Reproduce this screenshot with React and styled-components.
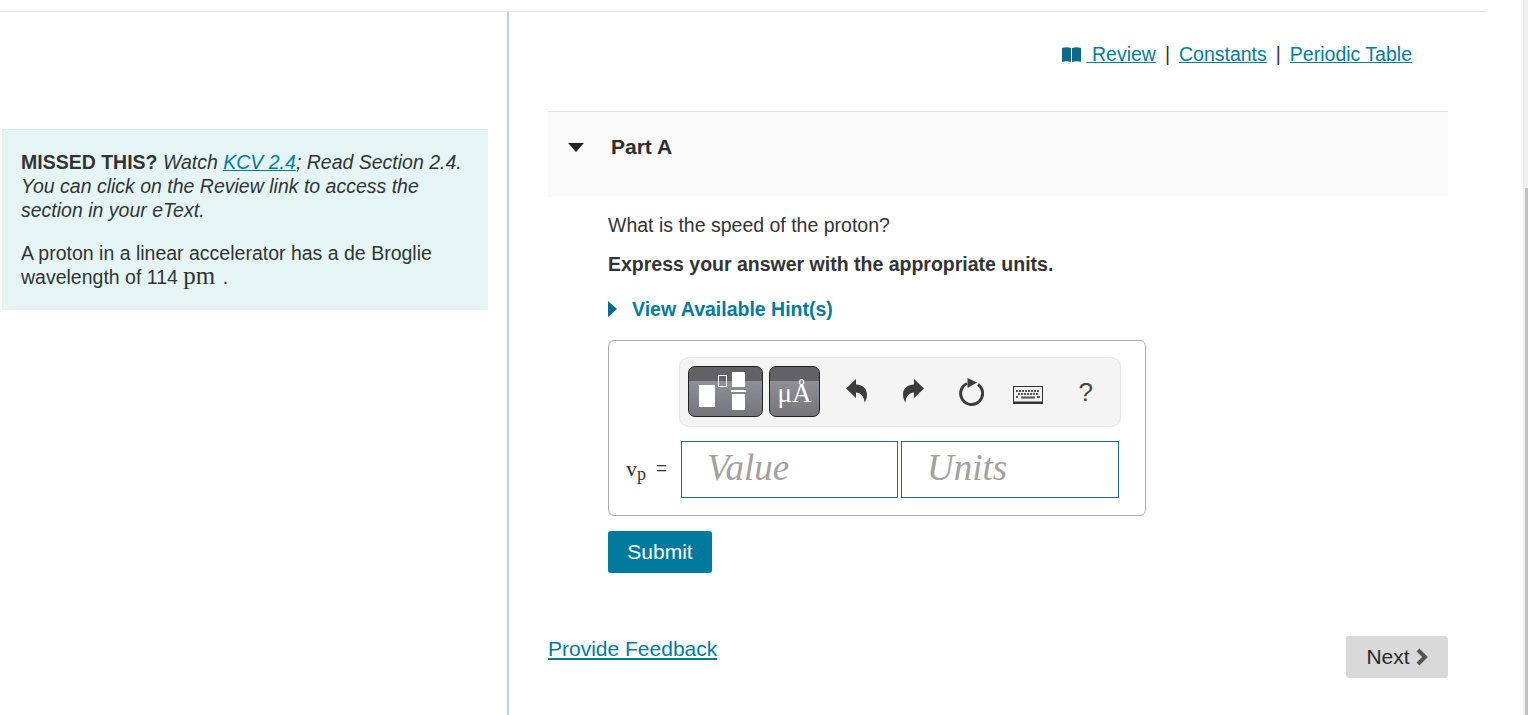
import React from "react";
import styled, { createGlobalStyle } from "styled-components";

const GlobalStyle = createGlobalStyle`
  html, body {
    margin: 0;
    padding: 0;
    height: 715px;
    overflow: hidden;
    background: #fff;
  }
  body {
    font-family: "Liberation Sans", Arial, sans-serif;
    font-size: 19.5px;
    line-height: 24px;
    color: #333;
  }
`;

function BookIcon() {
  return (
    <svg width="19" height="15" viewBox="0 0 19 15">
      <path d="M0 1 C3 0 6 0 9 1 V15 C6 14 3 14 0 15 Z" fill="#0b6a87" />
      <path d="M10 1 C13 0 16 0 19 1 V15 C16 14 13 14 10 15 Z" fill="#0b6a87" />
    </svg>
  );
}

function ReplyIcon({ flip }) {
  return (
    <svg width="21" height="24" viewBox="0 0 21 24" style={flip ? { transform: "scaleX(-1)" } : undefined}>
      <path
        d="M0 9.5 L10 0 V5.5 C16 5.5 21 9 21 15.5 C21 18.5 20 21.5 18.6 23.5 C18.2 18 15 13.5 10 13.5 V19 Z"
        fill="#3c3c3c"
      />
    </svg>
  );
}

function ResetIcon() {
  return (
    <svg width="26" height="28" viewBox="0 0 26 28">
      <path d="M9 5.5 A11 11 0 1 0 20 6.5" fill="none" stroke="#3c3c3c" strokeWidth="3" />
      <path d="M9.5 0 L19 4.5 L9.5 10 Z" fill="#3c3c3c" />
    </svg>
  );
}

function KeyboardIcon() {
  const rows = [
    [3, 6, 9, 12, 15, 18, 21, 24],
    [5, 8, 11, 14, 17, 20, 23],
  ];
  return (
    <svg width="30" height="18" viewBox="0 0 30 18">
      <rect x="0.5" y="0.5" width="29" height="17" fill="#f0f0f0" stroke="#333" />
      <rect x="1" y="15.5" width="28" height="2" fill="#333" />
      {rows.map((row, i) =>
        row.map((x) => <rect key={`${i}-${x}`} x={x} y={4 + i * 3} width="2" height="2" fill="#555" />)
      )}
      <rect x="3" y="10" width="2" height="2" fill="#555" />
      <rect x="8" y="10.5" width="14" height="2" fill="#555" />
      <rect x="24" y="10" width="3" height="2" fill="#555" />
    </svg>
  );
}

function TemplateGlyph() {
  return (
    <svg width="73" height="49" viewBox="1 1 73 49">
      <rect x="11" y="19" width="16" height="22" fill="#fff" />
      <rect x="30.5" y="9.5" width="8" height="11" fill="none" stroke="#fff" />
      <rect x="44" y="6" width="13" height="15" fill="#fff" />
      <rect x="43" y="24" width="15" height="2" fill="#fff" />
      <rect x="44" y="28" width="13" height="16" fill="#fff" />
    </svg>
  );
}

function ChevronIcon() {
  return (
    <svg width="13" height="18" viewBox="0 0 13 18">
      <path d="M3 2 L10 9 L3 16" fill="none" stroke="#555" strokeWidth="4" />
    </svg>
  );
}

export default function App() {
  return (
    <>
      <GlobalStyle />
      <Page>
        <Frame>
          <Columns>
            <LeftColumn>
              <IntroBox>
                <IntroText>
                  <b>MISSED THIS?</b>{" "}
                  <i>
                    Watch <a href="#kcv">KCV 2.4</a>; Read Section 2.4. You can click on the Review link to access the
                    section in your eText.
                  </i>
                </IntroText>
                <IntroText>
                  A proton in a linear accelerator has a de Broglie wavelength of 114 <MathUnit>pm</MathUnit> .
                </IntroText>
              </IntroBox>
            </LeftColumn>
            <RightColumn>
              <TopLinks>
                <BookIcon />
                <ReviewLink href="#review">&nbsp;Review</ReviewLink>
                <Divider>|</Divider>
                <TextLink href="#constants">Constants</TextLink>
                <Divider>|</Divider>
                <TextLink href="#table">Periodic Table</TextLink>
              </TopLinks>
              <PartHeader>
                <DownArrow />
                <PartTitle>Part A</PartTitle>
              </PartHeader>
              <PartBody>
                <Question>What is the speed of the proton?</Question>
                <Instruction>Express your answer with the appropriate units.</Instruction>
                <HintToggle>
                  <RightArrow />
                  View Available Hint(s)
                </HintToggle>
                <AnswerBox>
                  <Toolbar>
                    <MathButton $wide>
                      <TemplateGlyph />
                    </MathButton>
                    <MathButton>
                      <UnitGlyph>μÅ</UnitGlyph>
                    </MathButton>
                    <ToolSlot $first $lift={2}>
                      <ReplyIcon />
                    </ToolSlot>
                    <ToolSlot $lift={2}>
                      <ReplyIcon flip />
                    </ToolSlot>
                    <ToolSlot>
                      <ResetIcon />
                    </ToolSlot>
                    <ToolSlot $drop={6}>
                      <KeyboardIcon />
                    </ToolSlot>
                    <ToolSlot>
                      <HelpMark>?</HelpMark>
                    </ToolSlot>
                  </Toolbar>
                  <InputRow>
                    <VarLabel>
                      v<sub>p</sub>
                      <Equals>=</Equals>
                    </VarLabel>
                    <AnswerInput placeholder="Value" $width={217} readOnly />
                    <AnswerInput placeholder="Units" $width={218} readOnly />
                  </InputRow>
                </AnswerBox>
                <SubmitButton>Submit</SubmitButton>
              </PartBody>
              <Footer>
                <FeedbackLink href="#feedback">Provide Feedback</FeedbackLink>
                <NextButton>
                  Next
                  <ChevronIcon />
                </NextButton>
              </Footer>
            </RightColumn>
          </Columns>
        </Frame>
        <Scrollbar>
          <ScrollThumb />
        </Scrollbar>
      </Page>
    </>
  );
}

const Page = styled.div`
  display: flex;
  justify-content: space-between;
  width: 1528px;
  height: 715px;
  overflow: hidden;
`;

const Frame = styled.div`
  width: 1486px;
  padding-top: 11px;
  box-sizing: border-box;
`;

const Columns = styled.div`
  display: flex;
  height: 704px;
  border-top: 1px solid #e3e3e3;
`;

const LeftColumn = styled.div`
  width: 505px;
  flex: none;
  padding: 117px 0 0 2px;
  border-right: 2px solid #c6ced4;
`;

const IntroBox = styled.div`
  width: 486px;
  box-sizing: border-box;
  padding: 20px 19px 21px;
  background: #e5f5f6;
  border-top: 1px solid #dfe6e6;

  a {
    color: #007c9e;
  }
`;

const IntroText = styled.p`
  margin: 0 0 19px;

  &:last-child {
    margin-bottom: 0;
  }
`;

const MathUnit = styled.span`
  margin-right: 2px;
  font-family: "Liberation Serif", serif;
  font-size: 25px;
  line-height: 20px;
`;

const RightColumn = styled.div`
  flex: 1;
  padding: 30px 38px 0 39px;
  min-width: 0;
`;

const TopLinks = styled.div`
  display: flex;
  align-items: center;
  justify-content: flex-end;
  padding-right: 36px;
  height: 24px;
`;

const TextLink = styled.a`
  color: #007c9e;
`;

const ReviewLink = styled(TextLink)`
  margin-left: 6px;
`;

const Divider = styled.span`
  margin: 0 9px;
`;

const PartHeader = styled.div`
  display: flex;
  align-items: flex-start;
  height: 86px;
  margin-top: 45px;
  padding: 23px 0 0 20px;
  box-sizing: border-box;
  background: #f9f9f9;
  border-top: 1px solid #e0e0e0;
`;

const DownArrow = styled.span`
  width: 0;
  height: 0;
  margin: 8px 27px 0 0;
  border-left: 8px solid transparent;
  border-right: 8px solid transparent;
  border-top: 9px solid #222;
`;

const PartTitle = styled.div`
  font-size: 21px;
  font-weight: 700;
  color: #2d2d2d;
`;

const PartBody = styled.div`
  padding: 16px 0 0 60px;
`;

const Question = styled.p`
  margin: 0;
`;

const Instruction = styled.p`
  margin: 15px 0 0;
  font-weight: 700;
`;

const HintToggle = styled.div`
  display: flex;
  align-items: center;
  margin-top: 21px;
  font-weight: 700;
  color: #007c9e;
`;

const RightArrow = styled.span`
  width: 0;
  height: 0;
  margin-right: 15px;
  border-top: 8px solid transparent;
  border-bottom: 8px solid transparent;
  border-left: 9px solid #0a6c8c;
`;

const AnswerBox = styled.div`
  width: 538px;
  height: 176px;
  margin-top: 19px;
  padding-top: 16px;
  box-sizing: border-box;
  border: 1px solid #aaa;
  border-radius: 6px;
`;

const Toolbar = styled.div`
  display: flex;
  align-items: center;
  width: 442px;
  height: 70px;
  margin-left: 70px;
  padding: 0 8px;
  box-sizing: border-box;
  background: #f4f4f4;
  border: 1px solid #e6e6e6;
  border-radius: 10px;
`;

const MathButton = styled.div`
  display: flex;
  align-items: flex-end;
  justify-content: center;
  flex: none;
  width: ${(props) => (props.$wide ? "75px" : "51px")};
  height: 51px;
  margin: 0 ${(props) => (props.$wide ? "6px" : "0")} 2px 0;
  box-sizing: border-box;
  overflow: hidden;
  border: 1px solid #222;
  border-radius: 7px;
  background: linear-gradient(#626266 0, #626266 14px, #8f8f97 14px, #75757b 100%);
`;

const UnitGlyph = styled.span`
  margin-bottom: 5px;
  font-family: "Liberation Serif", serif;
  font-size: 27px;
  line-height: 36px;
  color: #fff;
  white-space: nowrap;
`;

const ToolSlot = styled.div`
  display: flex;
  align-items: center;
  justify-content: center;
  flex: none;
  width: 57.25px;
  margin: ${(props) => props.$drop || 0}px 0 ${(props) => props.$lift || 0}px ${(props) => (props.$first ? "8px" : "0")};
`;

const HelpMark = styled.span`
  font-size: 26px;
  line-height: 30px;
  color: #444;
`;

const InputRow = styled.div`
  display: flex;
  align-items: center;
  gap: 3px;
  margin-top: 14px;
  padding-left: 17px;
`;

const VarLabel = styled.div`
  width: 52px;
  flex: none;
  margin-bottom: 2px;
  font-family: "Liberation Serif", serif;
  font-size: 22px;
  white-space: nowrap;

  sub {
    font-size: 18px;
    line-height: 0;
    vertical-align: -4px;
  }
`;

const Equals = styled.span`
  margin-left: 10px;
  font-family: "Liberation Sans", sans-serif;
  font-size: 19px;
  vertical-align: 2px;
`;

const AnswerInput = styled.input`
  width: ${(props) => props.$width}px;
  height: 57px;
  padding: 0 0 4px 25px;
  box-sizing: border-box;
  border: 1px solid #17708f;
  border-radius: 0;
  outline: none;
  background: #fff;
  font-family: "Liberation Serif", serif;
  font-style: italic;
  font-size: 37px;

  &::placeholder {
    color: #a3a09e;
    opacity: 1;
  }
`;

const SubmitButton = styled.button`
  display: block;
  width: 104px;
  height: 42px;
  margin-top: 15px;
  padding: 0;
  border: none;
  border-radius: 3px;
  background: #007a9c;
  color: #fff;
  font: inherit;
  font-size: 21px;
`;

const Footer = styled.div`
  display: flex;
  justify-content: space-between;
  align-items: flex-start;
  margin-top: 63px;
`;

const FeedbackLink = styled.a`
  margin-top: 1px;
  color: #007c9e;
  font-size: 21px;
`;

const NextButton = styled.button`
  display: flex;
  align-items: center;
  justify-content: center;
  gap: 5px;
  width: 102px;
  height: 42px;
  padding: 0;
  border: none;
  border-radius: 3px;
  background: #d9d9d9;
  color: #2b2b2b;
  font: inherit;
  font-size: 21px;
`;

const Scrollbar = styled.div`
  display: flex;
  width: 5px;
  padding: 188px 0 0 2px;
  box-sizing: border-box;
  background: #f0f0f0;
`;

const ScrollThumb = styled.div`
  flex: 1;
  background: #c1c1c1;
`;
